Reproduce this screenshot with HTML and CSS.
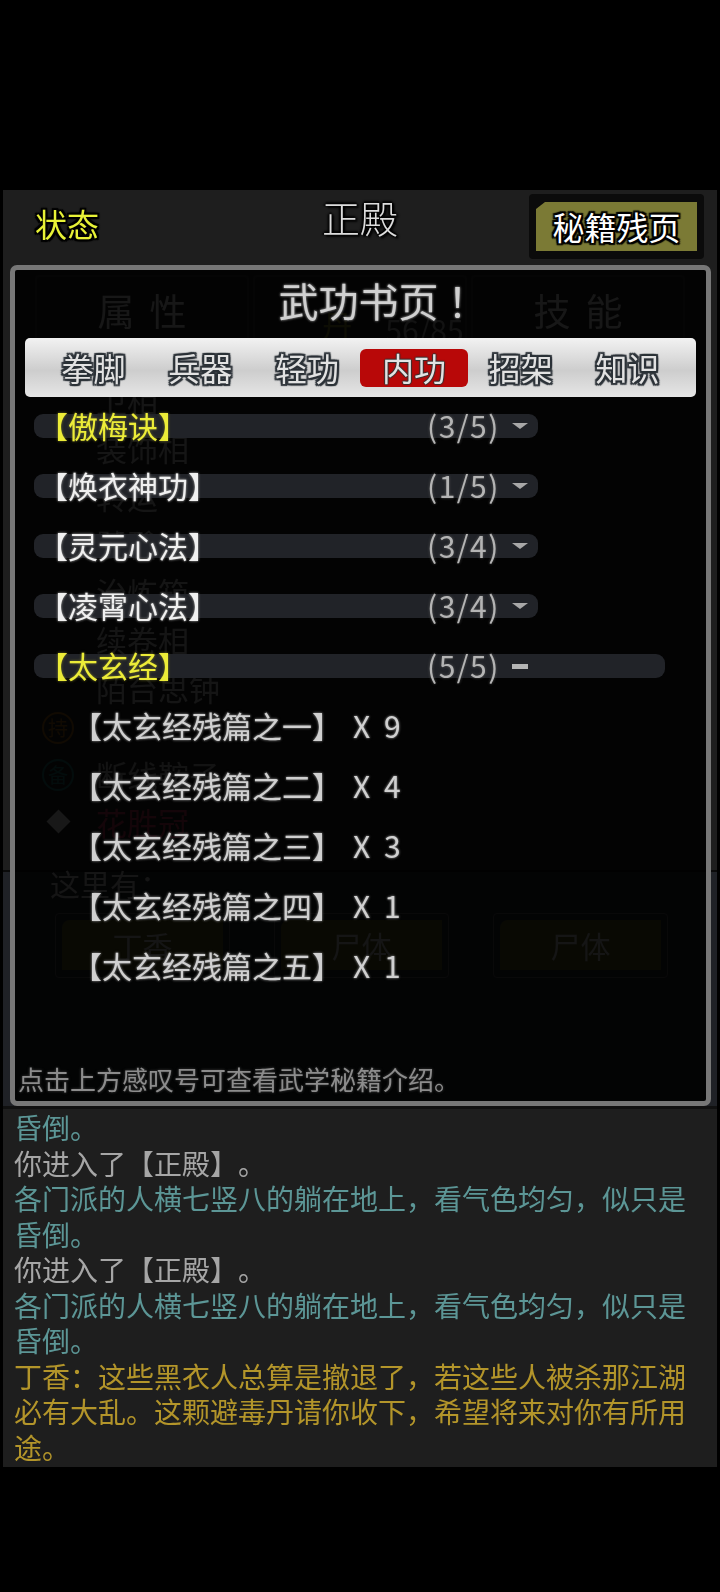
FILE: index.html
```html
<!DOCTYPE html>
<html lang="zh-CN">
<head>
<meta charset="utf-8">
<title>正殿</title>
<link rel="stylesheet" href="styles.css">
</head>
<body>
<div class="screen">
  <section class="top">
    <header class="head">
      <div class="status">状态</div>
      <div class="place">正殿</div>
      <div class="pages-btn"><div class="pages-in">秘籍残页</div></div>
    </header>
    <div class="gtabs">
      <div class="gtab">属性</div>
      <div class="gtab gtab-mid"><span class="dan">丹</span><span class="frac">56/85</span></div>
      <div class="gtab">技能</div>
    </div>
    <div class="gitems">
      <div class="gitem">卫相</div>
      <div class="gitem">装饰相</div>
      <div class="gitem">转运</div>
      <div class="gitem">饕餮</div>
      <div class="gitem">治炼箱</div>
      <div class="gitem">续卷相</div>
      <div class="gitem">陌台思钟</div>
    </div>
    <div class="gequip">
      <div class="geq"><span class="ring ring-o">持</span></div>
      <div class="geq"><span class="ring ring-t">备</span><span>断线鞍子</span></div>
      <div class="geq"><span class="dia-wrap"><span class="dia"></span></span><span class="red">花胜冠</span></div>
    </div>
  </section>
  <section class="lower">
    <div class="here">这里有：</div>
    <div class="npcs">
      <div class="npc"><div class="npc-in">丁香</div></div>
      <div class="npc"><div class="npc-in">尸体</div></div>
      <div class="npc"><div class="npc-in">尸体</div></div>
    </div>
  </section>
  <section class="log">
    <p class="teal">昏倒。</p>
    <p class="gray">你进入了【正殿】。</p>
    <p class="teal">各门派的人横七竖八的躺在地上，看气色均匀，似只是昏倒。</p>
    <p class="gray">你进入了【正殿】。</p>
    <p class="teal">各门派的人横七竖八的躺在地上，看气色均匀，似只是昏倒。</p>
    <p class="gold">丁香：这些黑衣人总算是撤退了，若这些人被杀那江湖必有大乱。这颗避毒丹请你收下，希望将来对你有所用途。</p>
  </section>

  <div class="modal">
    <h1 class="title">武功书页<span class="bang">！</span></h1>
    <nav class="cats">
      <div class="cat">拳脚</div>
      <div class="cat">兵器</div>
      <div class="cat">轻功</div>
      <div class="cat cat-on">内功</div>
      <div class="cat">招架</div>
      <div class="cat">知识</div>
    </nav>
    <div class="list">
      <div class="row"><div class="bar"><span class="name yellow">【傲梅诀】</span><span class="count">(3/5)</span><span class="caret"></span></div></div>
      <div class="row"><div class="bar"><span class="name">【焕衣神功】</span><span class="count">(1/5)</span><span class="caret"></span></div></div>
      <div class="row"><div class="bar"><span class="name">【灵元心法】</span><span class="count">(3/4)</span><span class="caret"></span></div></div>
      <div class="row"><div class="bar"><span class="name">【凌霄心法】</span><span class="count">(3/4)</span><span class="caret"></span></div></div>
      <div class="row"><div class="bar bar-open"><span class="name yellow">【太玄经】</span><span class="count">(5/5)</span><span class="dash"></span></div></div>
      <div class="child"><span class="cname">【太玄经残篇之一】</span><span class="qty">X 9</span></div>
      <div class="child"><span class="cname">【太玄经残篇之二】</span><span class="qty">X 4</span></div>
      <div class="child"><span class="cname">【太玄经残篇之三】</span><span class="qty">X 3</span></div>
      <div class="child"><span class="cname">【太玄经残篇之四】</span><span class="qty">X 1</span></div>
      <div class="child"><span class="cname">【太玄经残篇之五】</span><span class="qty">X 1</span></div>
    </div>
    <div class="tip">点击上方感叹号可查看武学秘籍介绍。</div>
  </div>
</div>
</body>
</html>
```
FILE: styles.css
```css
* { box-sizing: border-box; margin: 0; padding: 0; }
html, body { width: 720px; height: 1592px; background: #000; overflow: hidden; }
body { font-family: "Noto Sans CJK SC", "Noto Sans", sans-serif; text-spacing-trim: space-all; }

.screen {
  position: relative;
  width: 720px;
  height: 1592px;
  padding: 190px 3px 0;
  filter: blur(0.5px);
}

/* game panel behind the dialog */
.top { height: 680px; background: #1e1e1e; }
.head {
  height: 75px;
  display: grid;
  grid-template-columns: 1fr auto 1fr;
  align-items: start;
  padding-top: 4px;
}
.status {
  margin: 9px 0 0 32px;
  font-size: 32px;
  line-height: 40px;
  color: #e8f236;
  text-shadow: 2px 0 1px #000, -2px 0 1px #000, 0 2px 1px #000, 0 -2px 1px #000, 2px 2px 1px #000, -2px -2px 1px #000, 2px -2px 1px #000, -2px 2px 1px #000;
}
.place {
  margin-top: 3px;
  font-size: 38px;
  font-weight: 300;
  line-height: 40px;
  color: #ddd;
  text-shadow: 2px 2px 2px #000, -2px 0 2px #000, 0 -2px 2px #000, 2px 0 2px #000;
}
.pages-btn {
  justify-self: end;
  margin-right: 13px;
  width: 175px;
  height: 65px;
  padding: 8px 7px;
  background: #0b0b0b;
  border-radius: 4px;
}
.pages-in {
  height: 49px;
  background: #7b7a35;
  clip-path: polygon(9px 0, 100% 0, 100% 100%, 0 100%, 0 7px);
  font-size: 32px;
  line-height: 48px;
  text-align: center;
  color: #fff;
  text-shadow: 2px 0 1px #000, -2px 0 1px #000, 0 2px 1px #000, 0 -2px 1px #000, 2px 2px 1px #000, -2px -2px 1px #000, 2px -2px 1px #000, -2px 2px 1px #000;
}

.gtabs {
  height: 111px;
  display: grid;
  grid-template-columns: repeat(3, 1fr);
  gap: 4px;
  padding: 10px 32px 0;
}
.gtab {
  height: 70px;
  border: 2px solid #2a2a2a;
  border-radius: 4px;
  font-size: 37px;
  line-height: 66px;
  letter-spacing: 15px;
  text-indent: 15px;
  text-align: center;
  color: #b8b8b8;
}
.gtab-mid {
  display: flex;
  justify-content: center;
  gap: 33px;
  padding-left: 66px;
  letter-spacing: 0;
  text-indent: 0;
  font-size: 30px;
  line-height: 104px;
}
.dan { color: #6c6820; line-height: 94px; }
.frac { color: #909090; }

.gitems { padding-left: 93px; }
.gitem { height: 48px; font-size: 31px; line-height: 48px; color: #a8a8a8; }
.gequip { margin-top: -8px; padding-left: 39px; }
.geq {
  height: 47px;
  display: flex;
  align-items: center;
  gap: 22px;
  font-size: 31px;
  color: #989898;
}
.ring {
  width: 32px;
  height: 32px;
  border: 2px solid;
  border-radius: 50%;
  font-size: 20px;
  line-height: 28px;
  text-align: center;
}
.ring-o { color: #8a5410; }
.ring-t { color: #186462; }
.dia-wrap { width: 32px; display: flex; justify-content: center; }
.dia { width: 17px; height: 17px; background: #c0c0c0; transform: rotate(45deg); }
.red { color: #a02c48; }

.lower {
  height: 239px;
  background: #1f2126;
  border-top: 2px solid #0a0a0a;
  border-bottom: 3px solid #101010;
  padding: 0 0 0 47px;
}
.here { font-size: 30px; line-height: 36px; margin-top: -7px; color: #a8a8a8; position: relative; }
.npcs { display: flex; gap: 44px; margin-top: 12px; padding-left: 5px; }
.npc {
  width: 175px;
  height: 65px;
  padding: 6px;
  border: 1px solid #4a4a4a;
  border-radius: 4px;
}
.npc-in {
  height: 50px;
  background: #4e4e1e;
  border-radius: 8px 0 0 0;
  font-size: 30px;
  line-height: 50px;
  text-align: center;
  color: #a8a8a8;
}

/* message log */
.log {
  height: 358px;
  background: #1e1e1e;
  padding: 1px 0 0 11px;
  font-size: 28px;
  line-height: 35.5px;
}
.log p { width: 680px; }
.teal { color: #5c9696; }
.gray { color: #a6a6a6; }
.gold { color: #b3952a; }

/* dialog */
.modal {
  position: absolute;
  left: 10px;
  top: 265px;
  width: 701px;
  height: 841px;
  display: flex;
  flex-direction: column;
  border: 5px solid #777;
  border-radius: 7px;
  background: rgba(0, 0, 0, 0.88);
}
.title {
  height: 67px;
  padding-left: 45px;
  font-size: 40px;
  font-weight: 400;
  line-height: 60px;
  text-align: center;
  color: #d0d0d0;
  text-shadow: 0 0 3px #888, 0 0 2px #666;
}
.bang { margin-left: 9px; }
.cats {
  flex: none;
  height: 59px;
  margin: 1px 10px 0;
  padding: 0 15px;
  display: grid;
  grid-template-columns: repeat(6, 1fr);
  align-items: center;
  border-radius: 5px;
  background: linear-gradient(#f2f2f2, #cdcdcd 55%, #e6e6e6);
}
.cat {
  height: 38px;
  margin: 0 -1px;
  border-radius: 6px;
  font-size: 32px;
  line-height: 36px;
  text-align: center;
  color: #e2e2e2;
  text-shadow: 2px 0 1px #2c3238, -2px 0 1px #2c3238, 0 2px 1px #2c3238, 0 -2px 1px #2c3238, 2px 2px 1px #2c3238, -2px -2px 1px #2c3238, 2px -2px 1px #2c3238, -2px 2px 1px #2c3238;
}
.cat-on {
  background: #b80808;
  text-shadow: 1px 0 1px #333, -1px 0 1px #333, 0 1px 1px #333, 0 -1px 1px #333;
}

.list { margin-top: -1px; }
.row { height: 60px; padding-left: 19px; display: flex; align-items: center; }
.bar {
  width: 504px;
  height: 24px;
  display: flex;
  align-items: center;
  border-radius: 9px;
  background: #212328;
}
.bar-open { width: 631px; }
.name {
  flex: none;
  width: 393px;
  margin-left: 4px;
  margin-right: -4px;
  padding-bottom: 2px;
  font-size: 30px;
  line-height: 24px;
  color: #f0f0f0;
  text-shadow: 0 0 3px #888, 0 0 2px #666;
  white-space: nowrap;
}
.yellow { color: #ecec38; text-shadow: 0 0 3px #77772a; }
.count {
  flex: none;
  width: 85px;
  padding-bottom: 2px;
  font-size: 30px;
  line-height: 24px;
  color: #b4b4b4;
  letter-spacing: 1.5px;
  text-shadow: 0 0 3px #555;
}
.caret {
  width: 0;
  height: 0;
  border-left: 8px solid transparent;
  border-right: 8px solid transparent;
  border-top: 6px solid #a8a8a8;
}
.dash { width: 16px; height: 5px; background: #b4b4b4; }
.child {
  height: 60px;
  padding-left: 57px;
  padding-bottom: 2px;
  display: flex;
  align-items: center;
  font-size: 30px;
  line-height: 40px;
  color: #d0d0d0;
  text-shadow: 0 0 3px #777, 0 0 2px #555;
}
.cname { width: 281px; white-space: nowrap; }
.qty { word-spacing: 6px; letter-spacing: 0.5px; }
.tip {
  margin-top: auto;
  padding-left: 3px;
  font-size: 26px;
  line-height: 44px;
  color: #8c8c8c;
  text-shadow: 0 0 3px #444;
}
```
